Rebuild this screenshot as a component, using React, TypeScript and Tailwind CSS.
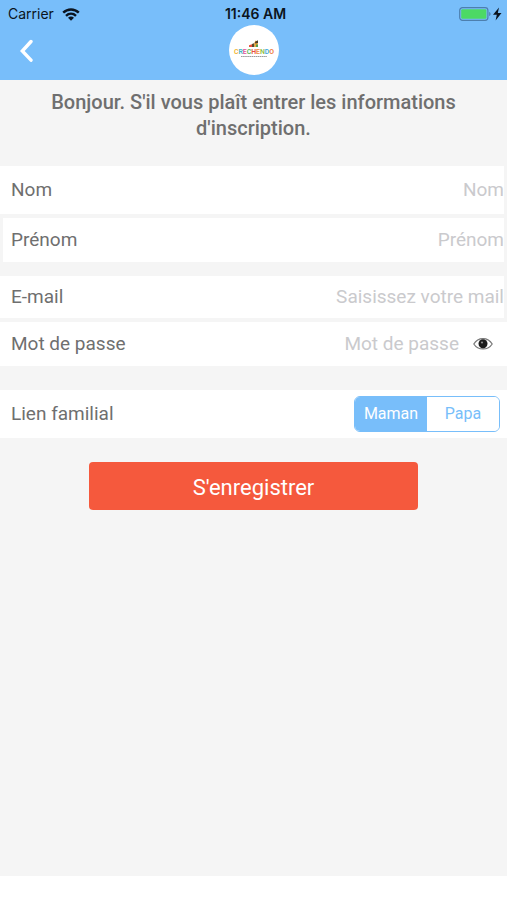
import React, { useState } from 'react';

const Wifi = () => (
  <svg width="18" height="13" viewBox="0 0 18 13" fill="none" stroke="#0b1420" strokeWidth="2.4" aria-hidden="true">
    <path d="M1.200 4.700C5.600 0.400 12.400 0.400 16.800 4.700" />
    <path d="M4 7.800C6.900 5 11.100 5 14 7.800" />
    <path d="M9 12.800 6 9.800C7.700 8 10.300 8 12 9.800Z" fill="#0b1420" stroke="none" />
  </svg>
);

const Battery = () => (
  <svg width="44" height="14" viewBox="0 0 44 14" aria-hidden="true">
    <rect x="0.700" y="0.700" width="28.200" height="12.600" rx="2.800" fill="none" stroke="#4d7fae" strokeWidth="1.200" />
    <rect x="2.200" y="2.200" width="25.200" height="9.600" rx="1.200" fill="#4cd964" />
    <path d="M30.200 5C32 5.500 32 8.500 30.200 9Z" fill="#4d7fae" />
    <path d="M40 0.500 34 7.800H37.800L36.600 13.500 42.500 6H38.800Z" fill="#0b1420" />
  </svg>
);

const letters = [
  ['C', '#f2b632'],
  ['R', '#3fb7c4'],
  ['E', '#e0529c'],
  ['C', '#5bb85d'],
  ['H', '#e94f3d'],
  ['E', '#f08a3c'],
  ['N', '#8cc043'],
  ['D', '#3fa9dd'],
  ['O', '#ee7b3b'],
];

const Logo = () => (
  <svg width="50" height="50" viewBox="0 0 50 50" className="rounded-full bg-white" role="img" aria-label="Crechendo">
    <path d="M20 22V20.200L23 19.200V22Z" fill="#e94f3d" />
    <path d="M23 22V19L25.500 18V22Z" fill="#5b4a2a" />
    <path d="M25.500 22V17.500L26.500 15.500L28.800 16.500V22Z" fill="#f2a632" />
    <path d="M25.800 17 29 15.200V18L26.500 18.600Z" fill="#4a3a2c" />
    <path d="M27 22V19.500H29V22Z" fill="#4f9d57" />
    <text x="25" y="28.800" textAnchor="middle" fontSize="6.900" fontWeight="600" fontFamily="Roboto, sans-serif">
      {letters.map(([letter, color], i) => (
        <tspan key={i} fill={color}>{letter}</tspan>
      ))}
    </text>
    <path d="M12 31.500H38" stroke="#9a9a9a" strokeWidth="1.100" strokeDasharray="1.600 0.500" />
  </svg>
);

const Eye = () => (
  <svg width="20" height="14" viewBox="0 0 20 14" aria-hidden="true">
    <path d="M0.800 7C5 -0.300 15 -0.300 19.200 7C15 13.600 5 13.600 0.800 7Z" fill="#fff" stroke="#777" strokeWidth="1.200" />
    <circle cx="10" cy="6.800" r="4.500" fill="#1b1b1b" />
    <circle cx="9" cy="5.500" r="1.100" fill="#8a8a8a" />
  </svg>
);

interface FieldProps {
  id: string;
  label: string;
  placeholder: string;
  type?: string;
  className: string;
  children?: React.ReactNode;
}

const Field: React.FC<FieldProps> = ({ id, label, placeholder, type = 'text', className, children }) => (
  <div className={`flex items-center bg-white ${className}`}>
    <label htmlFor={id} className="shrink-0">{label}</label>
    <input
      id={id}
      type={type}
      placeholder={placeholder}
      className="min-w-0 flex-1 bg-transparent text-right outline-none placeholder:text-[#cacacd]"
    />
    {children}
  </div>
);

const App: React.FC = () => {
  const [showPassword, setShowPassword] = useState(false);
  const [parent, setParent] = useState('Maman');

  return (
    <div className="flex min-h-screen flex-col bg-white font-[Roboto,sans-serif] text-[#6f6f6f]">
      <header className="h-20 bg-[#78befa]">
        <div className="grid h-[25px] grid-cols-3 items-center pt-[3px] pr-1 pl-2 font-[Inter,sans-serif] text-sm text-[#0b1420]">
          <div className="flex items-center gap-2">
            <span>Carrier</span>
            <Wifi />
          </div>
          <span className="text-center font-semibold">11:46 AM</span>
          <div className="flex justify-end">
            <Battery />
          </div>
        </div>
        <div className="grid grid-cols-3 items-center">
          <button type="button" aria-label="Retour" className="ml-4 w-5 p-1">
            <svg width="14" height="24" viewBox="0 0 14 24" fill="none" stroke="#fff" strokeWidth="3.400" aria-hidden="true">
              <path d="M11 3.500 2.300 13 11 22.200" strokeLinecap="round" />
            </svg>
          </button>
          <div className="flex justify-center">
            <Logo />
          </div>
        </div>
      </header>

      <main className="flex-1 bg-[#f5f5f5]">
        <h1 className="px-10 pt-[9px] text-center text-xl leading-[26px] font-medium">
          Bonjour. S'il vous plaît entrer les informations d'inscription.
        </h1>

        <form className="mt-[25px] text-[19px]" onSubmit={(e) => e.preventDefault()}>
          <Field id="nom" label="Nom" placeholder="Nom" className="mr-[3px] h-12 pl-[11px]" />
          <Field id="prenom" label="Prénom" placeholder="Prénom" className="mx-[3px] mt-1 h-11 pl-2" />
          <Field
            id="email"
            label="E-mail"
            placeholder="Saisissez votre mail"
            type="email"
            className="mt-[14px] mr-[3px] h-[42px] pl-[11px]"
          />
          <Field
            id="password"
            label="Mot de passe"
            placeholder="Mot de passe"
            type={showPassword ? 'text' : 'password'}
            className="mt-1 h-11 pr-[14px] pl-[11px]"
          >
            <button
              type="button"
              aria-label="Afficher le mot de passe"
              className="ml-[14px]"
              onClick={() => setShowPassword(!showPassword)}
            >
              <Eye />
            </button>
          </Field>

          <div className="mt-6 flex h-12 items-center justify-between bg-white pr-[7px] pl-[11px]">
            <span id="lien">Lien familial</span>
            <div
              role="group"
              aria-labelledby="lien"
              className="grid h-9 w-[146px] grid-cols-2 overflow-hidden rounded-md border border-[#78befa] text-base"
            >
              {['Maman', 'Papa'].map((name) => (
                <button
                  key={name}
                  type="button"
                  aria-pressed={parent === name}
                  onClick={() => setParent(name)}
                  className={parent === name ? 'bg-[#78befa] text-white' : 'bg-white text-[#78befa]'}
                >
                  {name}
                </button>
              ))}
            </div>
          </div>

          <button
            type="submit"
            className="mx-auto mt-6 block h-12 w-[65%] rounded bg-[#f5593d] pt-[2px] text-[22px] text-white"
          >
            S'enregistrer
          </button>
        </form>
      </main>

      <footer className="h-6" />
    </div>
  );
};

export default App;
